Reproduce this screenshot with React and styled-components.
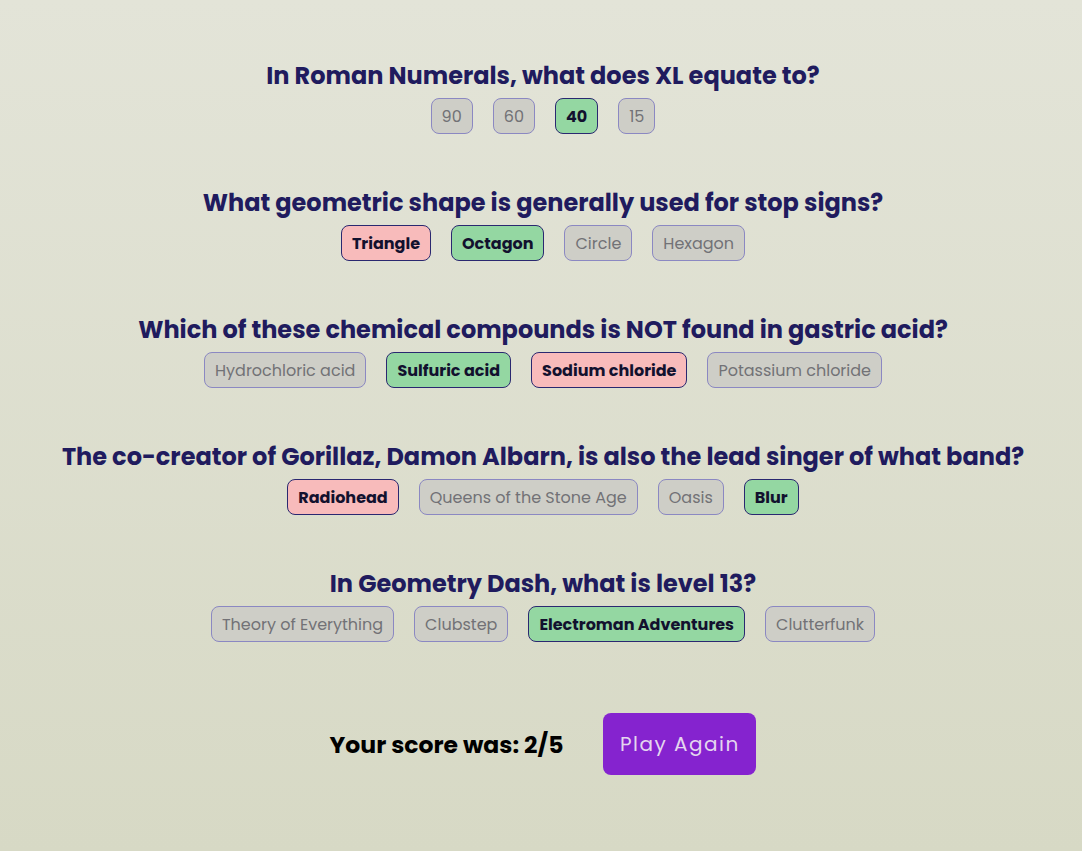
import React from "react";
import styled, { createGlobalStyle, css } from "styled-components";

const GlobalStyle = createGlobalStyle`
  * { box-sizing: border-box; }
  html, body {
    margin: 0;
    padding: 0;
  }
  body {
    min-height: 100vh;
    background: linear-gradient(180deg, #e3e4d8 0%, #d7d9c5 100%);
    font-family: "Poppins", "DejaVu Sans", sans-serif;
  }
`;

const questions = [
  {
    question: "In Roman Numerals, what does XL equate to?",
    answers: ["90", "60", "40", "15"],
    correct: "40",
    picked: "40",
  },
  {
    question: "What geometric shape is generally used for stop signs?",
    answers: ["Triangle", "Octagon", "Circle", "Hexagon"],
    correct: "Octagon",
    picked: "Triangle",
  },
  {
    question: "Which of these chemical compounds is NOT found in gastric acid?",
    answers: ["Hydrochloric acid", "Sulfuric acid", "Sodium chloride", "Potassium chloride"],
    correct: "Sulfuric acid",
    picked: "Sodium chloride",
  },
  {
    question: "The co-creator of Gorillaz, Damon Albarn, is also the lead singer of what band?",
    answers: ["Radiohead", "Queens of the Stone Age", "Oasis", "Blur"],
    correct: "Blur",
    picked: "Radiohead",
  },
  {
    question: "In Geometry Dash, what is level 13?",
    answers: ["Theory of Everything", "Clubstep", "Electroman Adventures", "Clutterfunk"],
    correct: "Electroman Adventures",
    picked: "Electroman Adventures",
  },
];

export default function App() {
  return (
    <>
      <GlobalStyle />
      <Page>
        <QuizList>
          {questions.map((q) => (
            <Question key={q.question}>
              <QuestionTitle>{q.question}</QuestionTitle>
              <AnswerRow>
                {q.answers.map((a) => {
                  const state =
                    a === q.correct ? "correct" : a === q.picked ? "wrong" : "idle";
                  return (
                    <Answer key={a} state={state}>
                      {a}
                    </Answer>
                  );
                })}
              </AnswerRow>
            </Question>
          ))}
        </QuizList>
        <ScoreRow>
          <ScoreText>Your score was: 2/5</ScoreText>
          <PlayAgain>Play Again</PlayAgain>
        </ScoreRow>
      </Page>
    </>
  );
}

const Page = styled.main`
  display: flex;
  flex-direction: column;
  align-items: center;
  padding: 61px 0 0 4px;
`;

const QuizList = styled.section`
  display: flex;
  flex-direction: column;
  align-items: center;
  gap: 54px;
`;

const Question = styled.div`
  display: flex;
  flex-direction: column;
  align-items: center;
`;

const QuestionTitle = styled.h3`
  margin: 0 0 7px;
  font-size: 24px;
  line-height: 30px;
  font-weight: 700;
  color: #201b5e;
  text-align: center;
`;

const AnswerRow = styled.div`
  display: flex;
  justify-content: center;
  gap: 20px;
`;

const Answer = styled.button`
  height: 36px;
  padding: 0 10px;
  border-radius: 8px;
  border: 1px solid #8b88c2;
  background: #cecec7;
  color: #727276;
  font-family: inherit;
  font-size: 16px;
  font-weight: 400;
  cursor: pointer;

  ${({ state }) =>
    state === "correct" &&
    css`
      background: #94d7a2;
      border-color: #2a2870;
      color: #12112e;
      font-weight: 700;
    `}
  ${({ state }) =>
    state === "wrong" &&
    css`
      background: #f8bbbb;
      border-color: #2a2870;
      color: #12112e;
      font-weight: 700;
    `}
`;

const ScoreRow = styled.div`
  display: flex;
  align-items: center;
  gap: 40px;
  margin-top: 71px;
`;

const ScoreText = styled.h3`
  margin: 0;
  font-size: 23.5px;
  font-weight: 700;
  color: #000;
`;

const PlayAgain = styled.button`
  width: 153px;
  height: 62px;
  border: none;
  border-radius: 8px;
  background: #8523cf;
  color: #e4d6ee;
  font-family: inherit;
  font-size: 20px;
  letter-spacing: 1.5px;
  cursor: pointer;
`;
